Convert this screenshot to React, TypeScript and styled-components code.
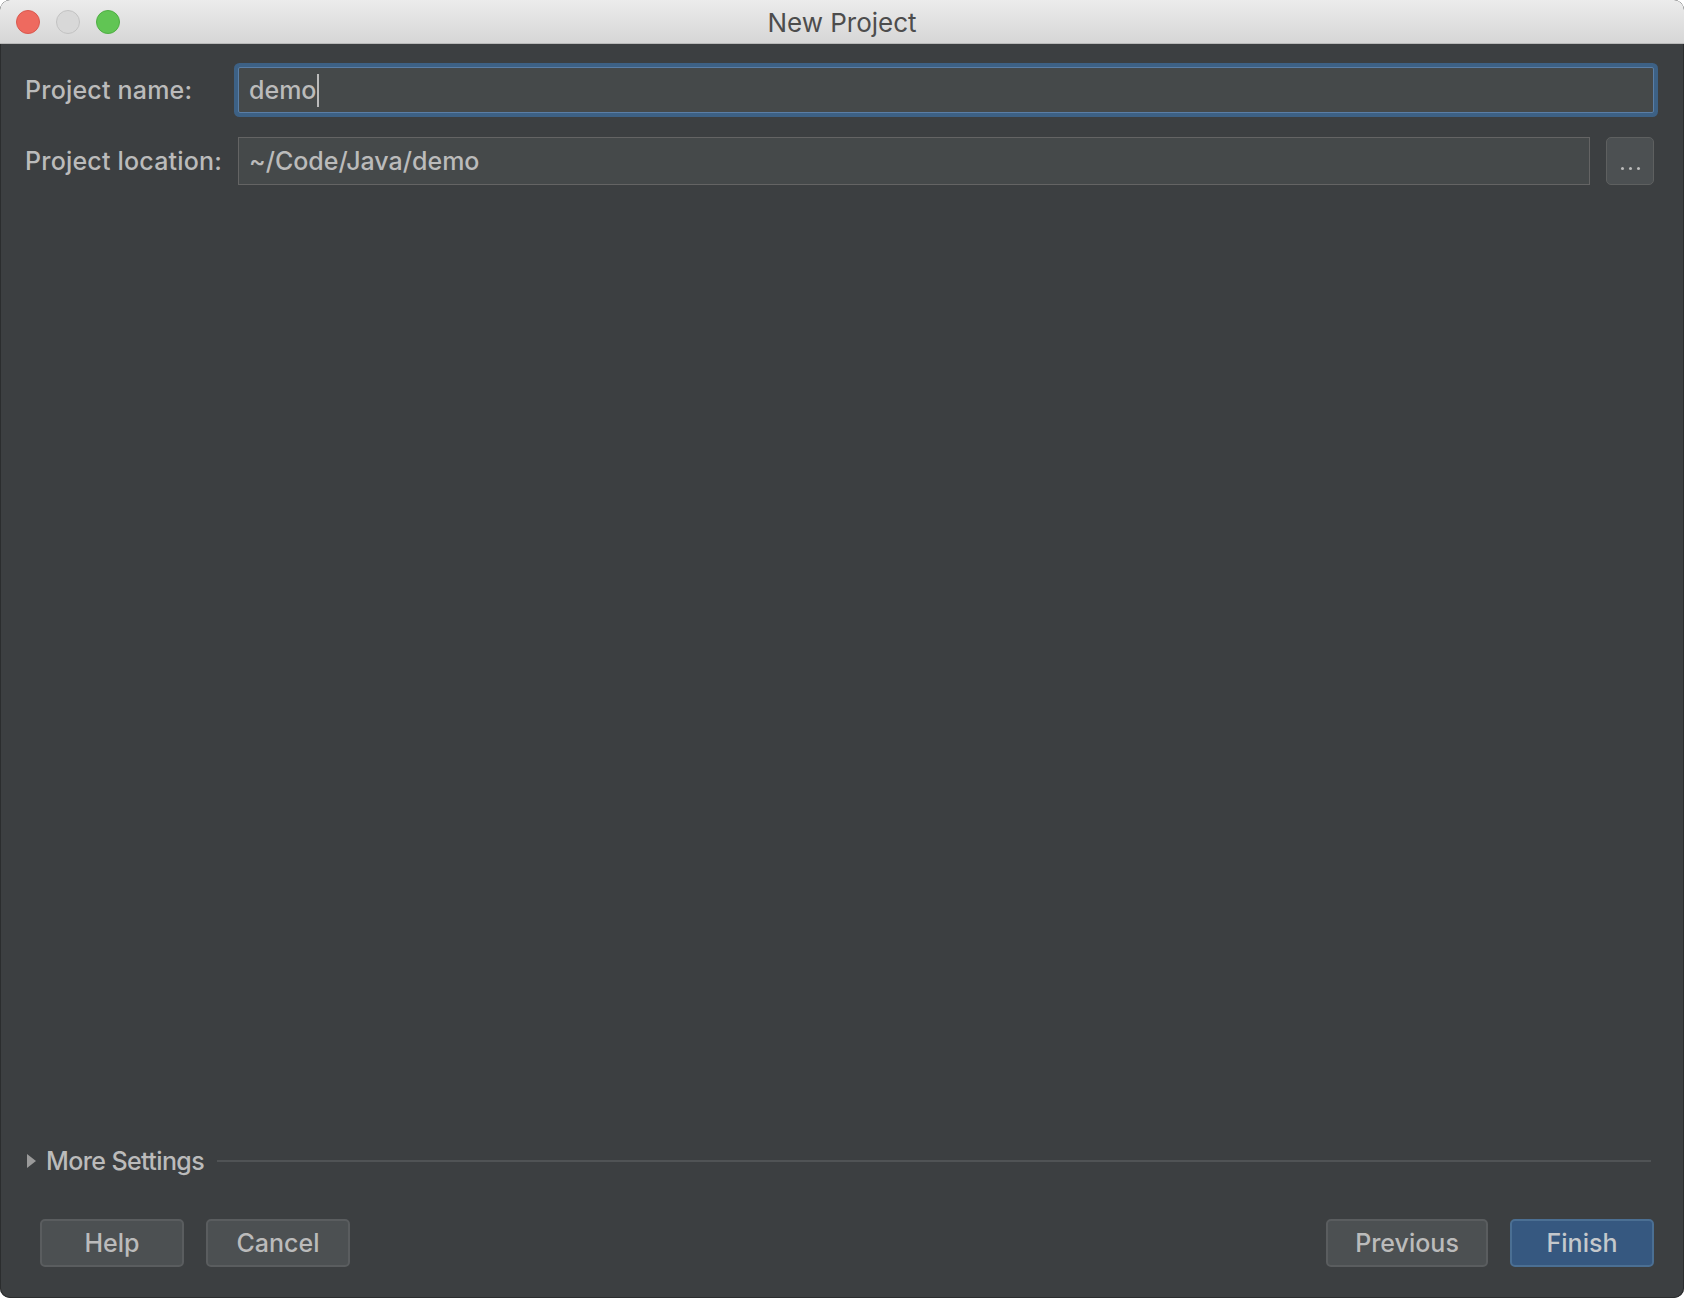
import React from 'react';
import styled, { createGlobalStyle } from 'styled-components';

const GlobalStyle = createGlobalStyle`
  html, body {
    margin: 0;
    padding: 0;
    height: 1298px;
    overflow: hidden;
    background: #ffffff;
  }
  * {
    box-sizing: border-box;
  }
`;

const Window = styled.div`
  width: 1684px;
  height: 1298px;
  display: flex;
  flex-direction: column;
  border-radius: 10px;
  overflow: hidden;
  background: #3c3f41;
  font-family: Inter, "Liberation Sans", sans-serif;
  font-weight: 500;
  color: #bbbbbb;
  box-shadow: inset 0 0 0 1px #2b2d2e;
`;

const TitleBar = styled.div`
  height: 44px;
  flex-shrink: 0;
  position: relative;
  display: flex;
  align-items: center;
  justify-content: center;
  padding-top: 2px;
  background: linear-gradient(#ececec, #d6d6d6);
  border-bottom: 1px solid #b9b9b9;
`;

const Lights = styled.div`
  position: absolute;
  left: 16px;
  top: 10px;
  display: flex;
  gap: 16px;
`;

const Light = styled.span<{ $fill: string; $edge: string }>`
  width: 24px;
  height: 24px;
  border-radius: 50%;
  background: ${({ $fill }) => $fill};
  border: 1px solid ${({ $edge }) => $edge};
`;

const Title = styled.div`
  font-size: 26px;
  font-weight: 400;
  color: #4d4d4d;
`;

const Body = styled.div`
  flex: 1;
  display: flex;
  flex-direction: column;
  padding: 23px 30px 31px 25px;
`;

const FormRow = styled.div`
  display: flex;
  align-items: center;
  margin-bottom: 24px;
`;

const Label = styled.label`
  width: 213px;
  flex-shrink: 0;
  font-size: 25px;
  letter-spacing: 0.2px;
`;

const Field = styled.div<{ $focused?: boolean; $height: number }>`
  flex: 1;
  height: ${({ $height }) => $height}px;
  display: flex;
  align-items: center;
  padding: 0 10px;
  background: #45494a;
  border: 1px solid ${({ $focused }) => ($focused ? '#5a7ea6' : '#646464')};
  border-radius: ${({ $focused }) => ($focused ? '2px' : '0')};
  box-shadow: ${({ $focused }) => ($focused ? '0 0 0 4px #3d6185' : 'none')};
  font-size: 25px;
`;

const Caret = styled.span`
  display: inline-block;
  width: 2px;
  height: 33px;
  margin-left: 1px;
  background: #bbbbbb;
`;

const BrowseButton = styled.button`
  width: 48px;
  height: 48px;
  margin-left: 16px;
  display: flex;
  align-items: flex-end;
  justify-content: center;
  gap: 5px;
  padding: 0 0 14px;
  background: #4c5052;
  border: 1px solid #5e6060;
  border-radius: 5px;
`;

const Dot = styled.span`
  width: 3px;
  height: 3px;
  border-radius: 50%;
  background: #bbbbbb;
`;

const Spacer = styled.div`
  flex: 1;
`;

const MoreSettings = styled.div`
  display: flex;
  align-items: center;
  height: 36px;
  padding-left: 2px;
  margin-right: 3px;
`;

const Triangle = styled.span`
  width: 0;
  height: 0;
  border-top: 7px solid transparent;
  border-bottom: 7px solid transparent;
  border-left: 9px solid #9a9a9a;
  margin-right: 10px;
`;

const MoreText = styled.span`
  font-size: 25px;
  letter-spacing: -0.6px;
`;

const Divider = styled.div`
  flex: 1;
  height: 2px;
  margin-left: 13px;
  background: #505355;
`;

const ButtonBar = styled.div`
  display: flex;
  align-items: center;
  gap: 22px;
  margin-top: 40px;
  padding-left: 15px;
`;

const DialogButton = styled.button<{ $primary?: boolean; $width: number }>`
  width: ${({ $width }) => $width}px;
  height: 48px;
  border-radius: 5px;
  background: ${({ $primary }) => ($primary ? '#365880' : '#4c5052')};
  border: 2px solid ${({ $primary }) => ($primary ? '#4b6f93' : '#5a5d5f')};
  color: ${({ $primary }) => ($primary ? '#c4c8cc' : '#bbbbbb')};
  font-family: Inter, "Liberation Sans", sans-serif;
  font-weight: 500;
  font-size: 25px;
  padding: 0;
`;

const Push = styled.div`
  flex: 1;
`;

const App = () => {
  return (
    <>
      <GlobalStyle/>
      <Window>
        <TitleBar>
          <Lights>
            <Light $fill="#ee6a5f" $edge="#d9594f"/>
            <Light $fill="#d8d8d8" $edge="#c2c2c2"/>
            <Light $fill="#61c554" $edge="#4fae44"/>
          </Lights>
          <Title>New Project</Title>
        </TitleBar>
        <Body>
          <FormRow>
            <Label>Project name:</Label>
            <Field $focused $height={46}>
              demo<Caret/>
            </Field>
          </FormRow>
          <FormRow>
            <Label>Project location:</Label>
            <Field $height={48}>~/Code/Java/demo</Field>
            <BrowseButton>
              <Dot/><Dot/><Dot/>
            </BrowseButton>
          </FormRow>
          <Spacer/>
          <MoreSettings>
            <Triangle/>
            <MoreText>More Settings</MoreText>
            <Divider/>
          </MoreSettings>
          <ButtonBar>
            <DialogButton $width={144}>Help</DialogButton>
            <DialogButton $width={144}>Cancel</DialogButton>
            <Push/>
            <DialogButton $width={162}>Previous</DialogButton>
            <DialogButton $primary $width={144}>Finish</DialogButton>
          </ButtonBar>
        </Body>
      </Window>
    </>
  );
};

export default App;
